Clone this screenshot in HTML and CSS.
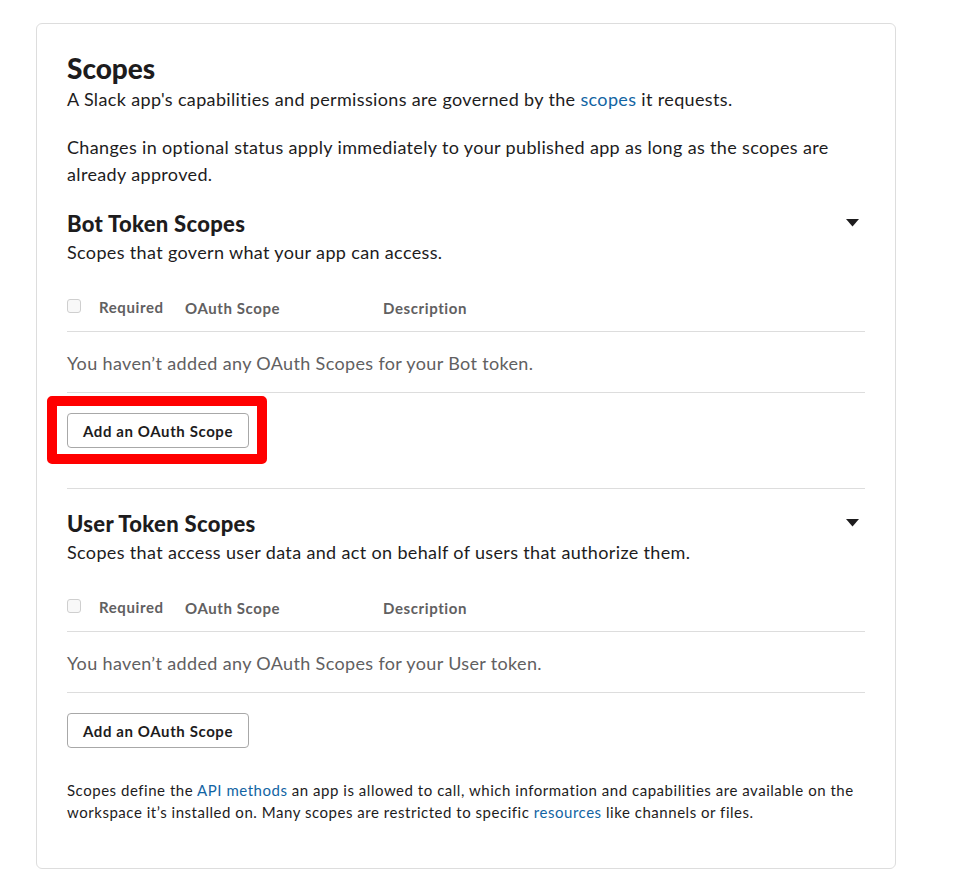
FILE: index.html
```html
<!DOCTYPE html>
<html lang="en">
<head>
<meta charset="utf-8">
<title>Scopes</title>
<link rel="stylesheet" href="styles.css">
</head>
<body>
<div class="card">
  <h2 class="card-title">Scopes</h2>
  <p class="lead">A Slack app's capabilities and permissions are governed by the <a href="#">scopes</a> it requests.</p>
  <p class="lead spaced">Changes in optional status apply immediately to your published app as long as the scopes are already approved.</p>

  <section class="scope-section divided">
    <div class="section-head">
      <h3 class="section-title">Bot Token Scopes</h3>
      <svg class="caret" width="13" height="8" viewBox="0 0 13 8"><path d="M0 0h13L6.5 7.5z" fill="#1d1c1d"/></svg>
    </div>
    <p class="lead">Scopes that govern what your app can access.</p>
    <div class="scope-table">
      <div class="table-head">
        <div class="col-required"><span class="checkbox"></span><span class="req-label">Required</span></div>
        <div class="col-scope">OAuth Scope</div>
        <div class="col-desc">Description</div>
      </div>
      <div class="table-empty">You haven’t added any OAuth Scopes for your Bot token.</div>
    </div>
    <div class="btn-wrap">
      <button class="btn">Add an OAuth Scope</button>
      <span class="highlight"></span>
    </div>
  </section>

  <section class="scope-section">
    <div class="section-head">
      <h3 class="section-title">User Token Scopes</h3>
      <svg class="caret" width="13" height="8" viewBox="0 0 13 8"><path d="M0 0h13L6.5 7.5z" fill="#1d1c1d"/></svg>
    </div>
    <p class="lead">Scopes that access user data and act on behalf of users that authorize them.</p>
    <div class="scope-table">
      <div class="table-head">
        <div class="col-required"><span class="checkbox"></span><span class="req-label">Required</span></div>
        <div class="col-scope">OAuth Scope</div>
        <div class="col-desc">Description</div>
      </div>
      <div class="table-empty">You haven’t added any OAuth Scopes for your User token.</div>
    </div>
    <div class="btn-wrap">
      <button class="btn">Add an OAuth Scope</button>
    </div>
  </section>

  <p class="footnote">Scopes define the <a href="#">API methods</a> an app is allowed to call, which information and capabilities are available on the workspace it’s installed on. Many scopes are restricted to specific <a href="#">resources</a> like channels or files.</p>
</div>
</body>
</html>
```

FILE: styles.css
```css
* { box-sizing: border-box; }

body {
  margin: 0;
  background: #fff;
  font-family: Lato, "Noto Sans", sans-serif;
  color: #1d1c1d;
}

a { color: #1264a3; text-decoration: none; }

.card {
  width: 860px;
  margin: 23px 0 0 36px;
  padding: 26px 30px 45px;
  border: 1px solid #dddddd;
  border-radius: 6px;
}

.card-title {
  margin: 0;
  font-size: 28px;
  line-height: 36px;
  font-weight: 900;
}

.lead {
  margin: 0;
  font-size: 18px;
  line-height: 27px;
  letter-spacing: 0.35px;
}

.lead.spaced { margin-top: 21px; }

.scope-section { padding-top: 21px; }
.scope-section.divided {
  padding-bottom: 40px;
  border-bottom: 1px solid #dddddd;
}
.scope-section + .scope-section { padding-top: 20px; }

.section-head {
  display: flex;
  align-items: center;
  justify-content: space-between;
}

.section-title {
  margin: 0;
  font-size: 22px;
  line-height: 30px;
  font-weight: 900;
  letter-spacing: 0.3px;
}

.caret { margin-right: 6px; margin-top: -3px; }

.scope-table { margin-top: 20px; }

.table-head {
  display: flex;
  align-items: center;
  padding: 8px 0 12px;
  border-bottom: 1px solid #dddddd;
  font-size: 15px;
  line-height: 22px;
  font-weight: 700;
  letter-spacing: 0.6px;
  color: #616061;
}

.col-required { width: 118px; display: flex; align-items: center; }
.col-scope { width: 198px; padding-top: 3px; }
.col-desc { padding-top: 3px; }

.checkbox {
  width: 14px;
  height: 14px;
  border: 1px solid #cfcfcf;
  border-radius: 3px;
  background: #f8f8f8;
  margin-top: -2px;
}

.req-label { margin-left: 18px; }

.table-empty {
  padding: 18px 0 15px;
  border-bottom: 1px solid #dddddd;
  font-size: 18px;
  line-height: 27px;
  letter-spacing: 0.35px;
  color: #616061;
}

.btn-wrap {
  position: relative;
  display: inline-block;
  margin-top: 20px;
}

.btn {
  height: 35px;
  padding: 0 15px;
  border: 1px solid #a8a8a8;
  border-radius: 4px;
  background: #fff;
  font-family: inherit;
  font-size: 15px;
  font-weight: 700;
  letter-spacing: 0.6px;
  color: #1d1c1d;
  display: block;
}

.highlight {
  position: absolute;
  top: -17px;
  left: -20px;
  right: -18px;
  bottom: -16px;
  border: 10px solid #ff0000;
  border-radius: 5px;
  pointer-events: none;
}

.footnote {
  margin: 31px 0 0;
  font-size: 15px;
  line-height: 22px;
  letter-spacing: 0.53px;
}
```
